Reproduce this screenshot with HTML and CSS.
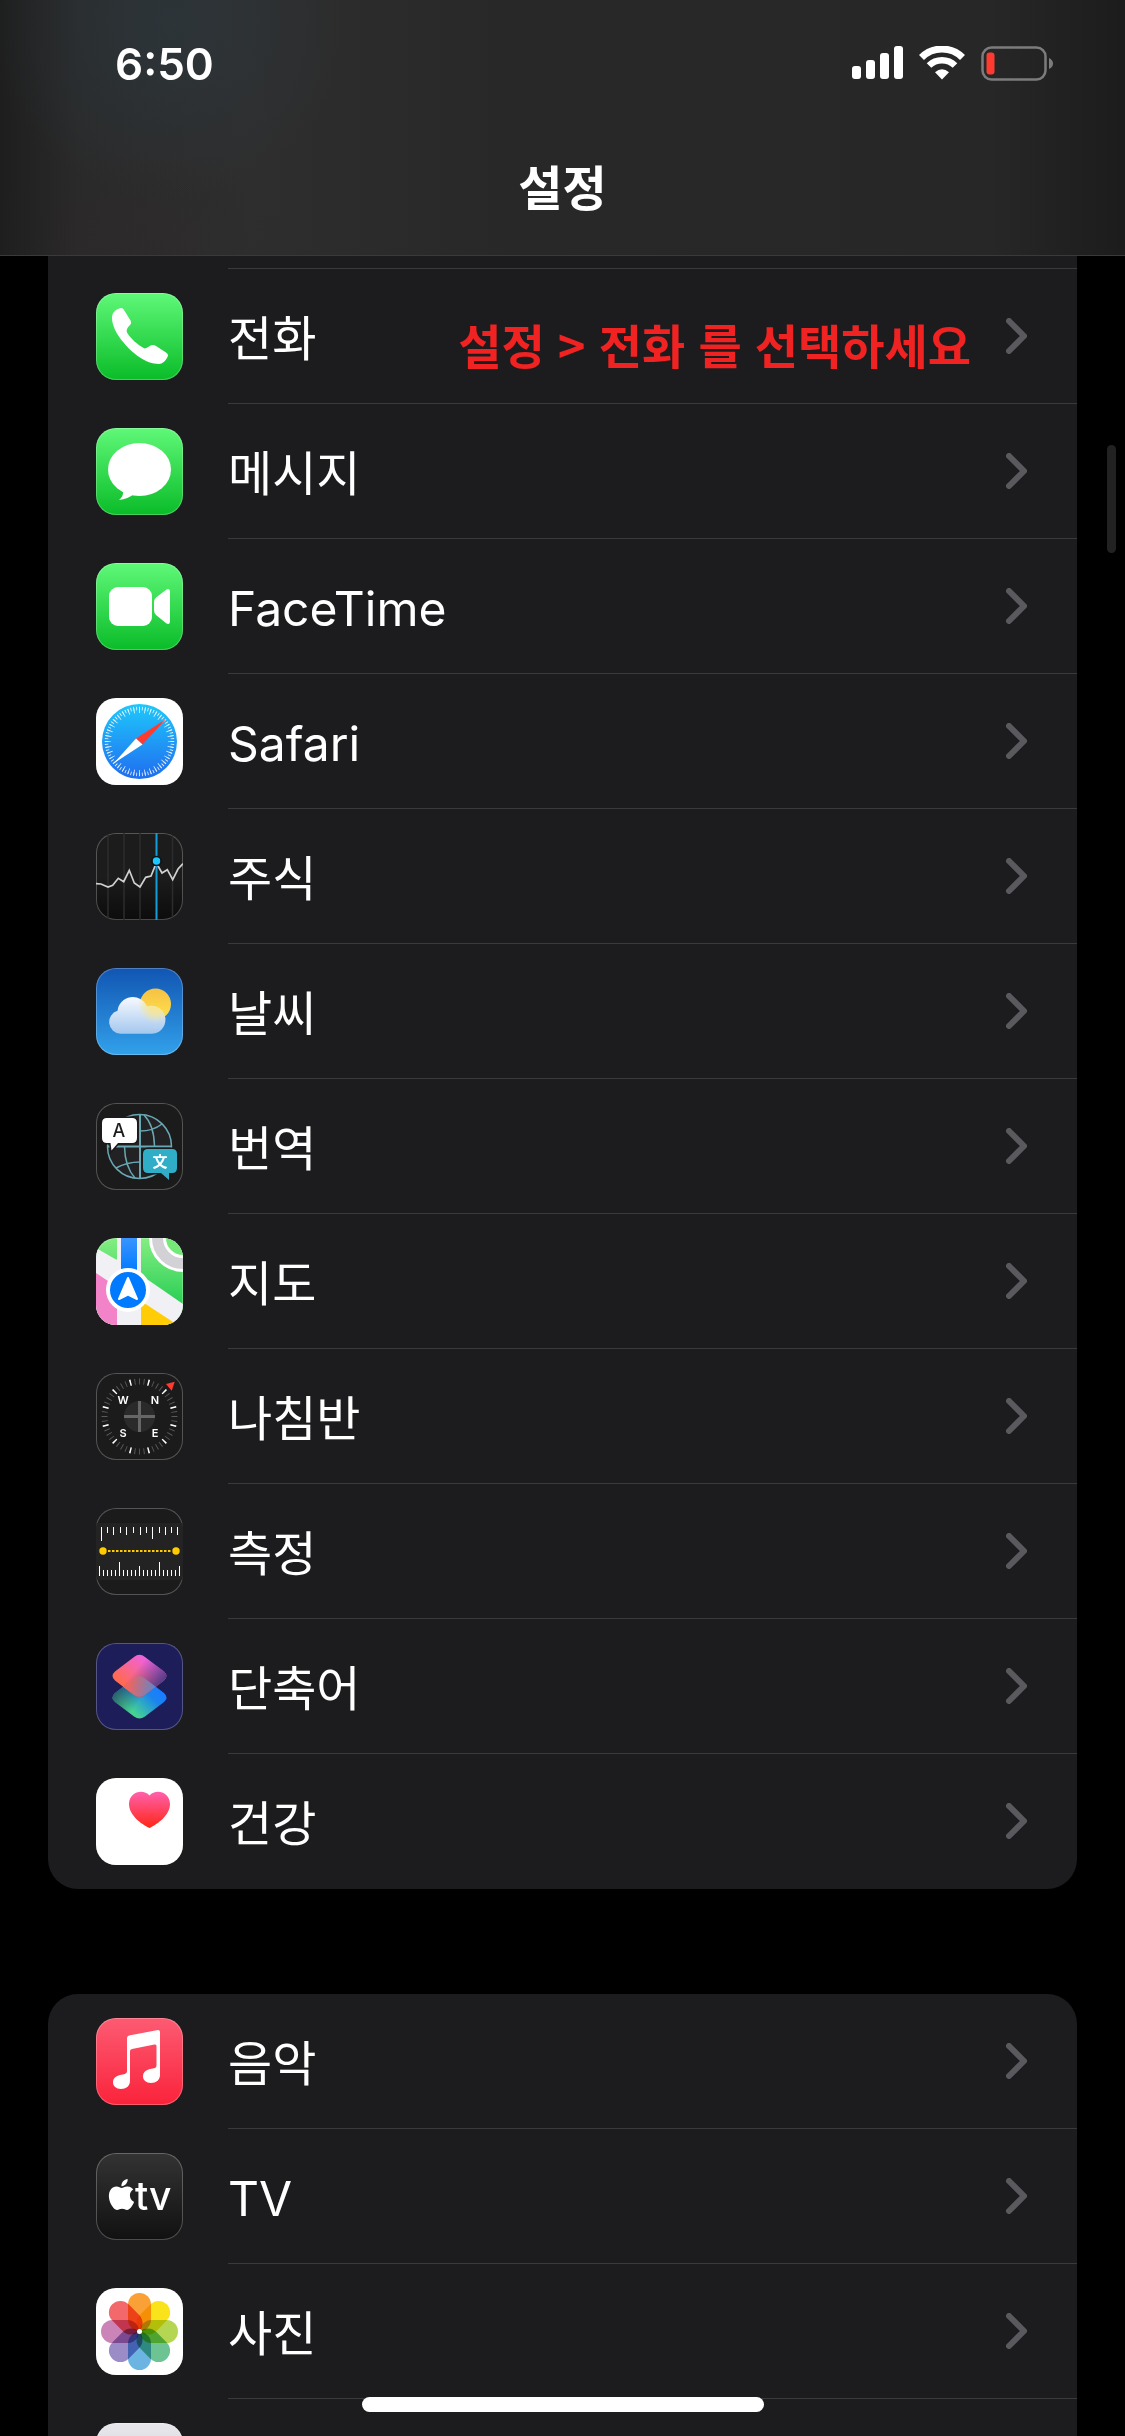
FILE: index.html
```html
<!DOCTYPE html>
<html lang="ko">
<head>
  <meta charset="UTF-8">
  <meta name="viewport" content="width=device-width, initial-scale=1.0">
  <title>설정</title>
  <link rel="stylesheet" href="styles.css">
</head>
<body>

  <!-- Header -->
  <header class="header">
    <div class="status-bar">
      <span class="time">6:50</span>
      <div class="status-icons">
        <svg width="51" height="34" viewBox="0 0 51 34" fill="#fff">
          <rect x="0" y="20" width="9" height="13" rx="3"/>
          <rect x="14" y="14" width="9" height="19" rx="3"/>
          <rect x="28" y="7" width="9" height="26" rx="3"/>
          <rect x="42" y="0" width="9" height="33" rx="3"/>
        </svg>
        <svg width="46" height="34" viewBox="0 0 46 34">
          <path d="M2.5 11.5a29 29 0 0 1 41 0" fill="none" stroke="#fff" stroke-width="7"/>
          <path d="M10 19.5a18.5 18.5 0 0 1 26 0" fill="none" stroke="#fff" stroke-width="6.5"/>
          <path d="M23 33.5l-7-7.3q7-6 14 0z" fill="#fff"/>
        </svg>
        <svg width="72" height="36" viewBox="0 0 72 36">
          <rect x="1.5" y="1.5" width="63" height="32" rx="9" fill="none" stroke="#7c7c7c" stroke-width="2.5"/>
          <rect x="5.5" y="6.5" width="8" height="22" rx="3" fill="#ff3b30"/>
          <path d="M68 12q4 2 4 5.5t-4 5.5z" fill="#7c7c7c"/>
        </svg>
      </div>
    </div>
    <h1 class="title">설정</h1>
  </header>

  <!-- Settings list -->
  <main class="content">
    <ul class="group group-first">
      <li class="row-end"></li>
      <li>
        <a class="row" href="#phone">
          <svg class="app-icon green" viewBox="0 0 87 87">
            <path fill="#fff" d="M16 25C16 19 20 16 25 15Q27 15 28 17L34.5 27.5Q36 30 34 32C31 35 30 37 31 39.5C35 46 42 52 48.5 55.5Q50 55.5 53 53.5Q57 51 60 53L70 59.5Q73 61.5 71.5 64Q68 71 63 71C50 71 36 60 28 50C20 41 16 32 16 25Z"/>
          </svg>
          <span class="label"><span>전화</span><strong class="note">설정 &gt; 전화 를 선택하세요</strong><svg class="chevron" viewBox="0 0 21 36"><path d="M3 3l15 15L3 33"/></svg></span>
        </a>
      </li>
      <li>
        <a class="row" href="#messages">
          <svg class="app-icon green" viewBox="0 0 87 87" fill="#fff">
            <ellipse cx="43.5" cy="41.5" rx="31.5" ry="26.5"/>
            <path d="M27 62Q28 68 23 72Q32 71 38 66Z"/>
          </svg>
          <span class="label"><span>메시지</span><svg class="chevron" viewBox="0 0 21 36"><path d="M3 3l15 15L3 33"/></svg></span>
        </a>
      </li>
      <li>
        <a class="row" href="#facetime">
          <svg class="app-icon green" viewBox="0 0 87 87" fill="#fff">
            <rect x="13" y="24" width="43" height="39" rx="9"/>
            <path d="M58 40Q58 36 60 34.5L70.5 26.5Q74 25 74 29V58Q74 62 70.5 60.5L60 52Q58 50 58 47Z"/>
          </svg>
          <span class="label"><span lang="en">FaceTime</span><svg class="chevron" viewBox="0 0 21 36"><path d="M3 3l15 15L3 33"/></svg></span>
        </a>
      </li>
      <li>
        <a class="row" href="#safari">
          <svg class="app-icon white" viewBox="0 0 87 87">
            <defs>
              <linearGradient id="safari-blue" x1="0" y1="0" x2="0" y2="1">
                <stop offset="0" stop-color="#1fc8fb"/>
                <stop offset="1" stop-color="#1f6df0"/>
              </linearGradient>
            </defs>
            <circle cx="43.5" cy="43.5" r="37.5" fill="url(#safari-blue)"/>
            <g fill="none" stroke="#fff" opacity=".85">
              <circle cx="43.5" cy="43.5" r="33" stroke-width="3.5" pathLength="72" stroke-dasharray=".3 .7" stroke-dashoffset=".15"/>
              <circle cx="43.5" cy="43.5" r="31.5" stroke-width="6" pathLength="36" stroke-dasharray=".15 .85" stroke-dashoffset=".075"/>
            </g>
            <path d="M70 21L46.5 46.5L40 40.5Z" fill="#ff3b30"/>
            <path d="M17.5 65.5L46.5 46.5L40 40.5Z" fill="#fff"/>
          </svg>
          <span class="label"><span lang="en">Safari</span><svg class="chevron" viewBox="0 0 21 36"><path d="M3 3l15 15L3 33"/></svg></span>
        </a>
      </li>
      <li>
        <a class="row" href="#stocks">
          <svg class="app-icon stocks" viewBox="0 0 87 87">
            <path d="M12 0V87M28 0V87M44 0V87M76.5 0V87" stroke="#2c2c2e" stroke-width="1.5"/>
            <path d="M60.5 0V87" stroke="#149ed8" stroke-width="2"/>
            <polyline fill="none" stroke="#d0d0d0" stroke-width="1.7" points="0,50.7 5,51 12,54 16.7,52.3 22.3,45.3 27.7,48.7 33.3,37.3 38.3,50 44,54 49.7,44.3 55,43 60.3,30 66,40 71.3,36.7 76.7,46.7 82,36 87,30.7"/>
            <circle cx="60.5" cy="28" r="4.5" fill="#1ac8ff" stroke="#111" stroke-width="1.5"/>
          </svg>
          <span class="label"><span>주식</span><svg class="chevron" viewBox="0 0 21 36"><path d="M3 3l15 15L3 33"/></svg></span>
        </a>
      </li>
      <li>
        <a class="row" href="#weather">
          <svg class="app-icon weather" viewBox="0 0 87 87">
            <defs>
              <linearGradient id="sun" x1="0" y1="0" x2="0" y2="1">
                <stop offset="0" stop-color="#f6c143"/>
                <stop offset="1" stop-color="#ffe24e"/>
              </linearGradient>
              <linearGradient id="cloud" gradientUnits="userSpaceOnUse" x1="0" y1="28" x2="0" y2="66">
                <stop offset="0" stop-color="#fafbff"/>
                <stop offset="1" stop-color="#a3c7ee"/>
              </linearGradient>
              <radialGradient id="glow" gradientUnits="userSpaceOnUse" cx="60" cy="37" r="18">
                <stop offset=".4" stop-color="#f8e58a" stop-opacity=".85"/>
                <stop offset="1" stop-color="#f8e58a" stop-opacity="0"/>
              </radialGradient>
            </defs>
            <circle cx="59.5" cy="36" r="15.5" fill="url(#sun)"/>
            <path fill="url(#cloud)" d="M24.5 65.7A11.7 11.7 0 0 1 21.5 42.8A15.4 15.4 0 0 1 51 38.5A14 14 0 1 1 54 65.7Z"/>
            <path fill="url(#glow)" d="M24.5 65.7A11.7 11.7 0 0 1 21.5 42.8A15.4 15.4 0 0 1 51 38.5A14 14 0 1 1 54 65.7Z"/>
          </svg>
          <span class="label"><span>날씨</span><svg class="chevron" viewBox="0 0 21 36"><path d="M3 3l15 15L3 33"/></svg></span>
        </a>
      </li>
      <li>
        <a class="row" href="#translate">
          <svg class="app-icon dark" viewBox="0 0 87 87">
            <g fill="none" stroke="#68a8b4" stroke-width="1.5">
              <circle cx="43.5" cy="43.5" r="32" fill="#222224"/>
              <path d="M44 11V76M11 43.5H76" stroke-width="2"/>
              <path d="M48 12Q58 22 58.5 43M44 28Q57 28 66 21M28.5 44Q29 64 39 75M44 59Q31 59 20 65"/>
            </g>
            <path d="M11 15H36Q41 15 41 20V35Q41 40 36 40H22L15.5 47.5L14.5 40H11Q6 40 6 35V20Q6 15 11 15Z" fill="#fff" stroke="#1b1b1c" stroke-width="3" paint-order="stroke"/>
            <path d="M52 46H76Q81 46 81 51V65Q81 70 76 70H73V77L65 70H52Q47 70 47 65V51Q47 46 52 46Z" fill="#30aec8" stroke="#1b1b1c" stroke-width="3" paint-order="stroke"/>
            <text class="glyph-a" x="23" y="34" text-anchor="middle">A</text>
            <text class="glyph-wen" x="64" y="64" text-anchor="middle">文</text>
          </svg>
          <span class="label"><span>번역</span><svg class="chevron" viewBox="0 0 21 36"><path d="M3 3l15 15L3 33"/></svg></span>
        </a>
      </li>
      <li>
        <a class="row" href="#maps">
          <svg class="app-icon maps" viewBox="0 0 87 87">
            <defs>
              <linearGradient id="route" x1="0" y1="0" x2="0" y2="1">
                <stop offset="0" stop-color="#3a94ff"/>
                <stop offset="1" stop-color="#007aff"/>
              </linearGradient>
            </defs>
            <path d="M0 10L20 21.5H45V37L87 66V87H0Z" fill="#f0f0f5"/>
            <path d="M21 0H45V87H21Z" fill="#f0f0f5"/>
            <path d="M25 0H41V34H25Z" fill="url(#route)"/>
            <path d="M0 35L21 49V87H0Z" fill="#f283c9"/>
            <path d="M45 63L77 84L81 87H45Z" fill="#ffcc05"/>
            <circle cx="87" cy="0" r="32.5" fill="#d1d1d6" stroke="#fff" stroke-width="3"/>
            <circle cx="87" cy="0" r="18.5" fill="#76e878" stroke="#fff" stroke-width="3"/>
            <circle cx="32" cy="52" r="20" fill="#007aff" stroke="#fff" stroke-width="4"/>
            <path d="M32 40L41 61L32 56.5L23 61Z" fill="#fff" stroke="#fff" stroke-width="2" stroke-linejoin="round"/>
          </svg>
          <span class="label"><span>지도</span><svg class="chevron" viewBox="0 0 21 36"><path d="M3 3l15 15L3 33"/></svg></span>
        </a>
      </li>
      <li>
        <a class="row" href="#compass">
          <svg class="app-icon dark" viewBox="0 0 87 87">
            <circle cx="43.5" cy="43.5" r="15.5" fill="#2a2a2b"/>
            <path d="M43.5 28V59M28 43.5H59" stroke="#666" stroke-width="3"/>
            <g fill="none" stroke-width="6">
              <circle cx="43.5" cy="43.5" r="35" stroke="#5a5a5a" pathLength="48" stroke-dasharray=".2 .8" stroke-dashoffset=".1"/>
              <circle cx="43.5" cy="43.5" r="35" stroke="#fff" pathLength="12" stroke-dasharray=".08 .92" stroke-dashoffset=".54"/>
            </g>
            <path d="M70 11L78.7 8.7L75.7 17.7Z" fill="#ff3b30"/>
            <g class="glyph-compass" text-anchor="middle">
              <text x="27" y="31">W</text>
              <text x="59" y="31">N</text>
              <text x="27" y="64">S</text>
              <text x="59" y="64">E</text>
            </g>
          </svg>
          <span class="label"><span>나침반</span><svg class="chevron" viewBox="0 0 21 36"><path d="M3 3l15 15L3 33"/></svg></span>
        </a>
      </li>
      <li>
        <a class="row" href="#measure">
          <svg class="app-icon dark" viewBox="0 0 87 87">
            <rect y="15" width="87" height="57" fill="#232324"/>
            <path stroke="#fff" d="M5.5 19V33M11.5 19V25M17.5 19V27M24.5 19V25M30.5 19V27M37.5 19V25M44.5 19V27M50.5 19V25M56.5 19V31M63.5 19V25M69.5 19V27M75.5 19V25M81.5 19V27"/>
            <path stroke="#fff" d="M3.5 58V68M7.5 62V68M11.5 62V68M15.5 62V68M19.5 62V68M23.5 54V68M27.5 62V68M31.5 62V68M35.5 62V68M39.5 62V68M43.5 58V68M47.5 62V68M51.5 62V68M55.5 62V68M59.5 62V68M63.5 54V68M67.5 62V68M71.5 62V68M75.5 62V68M79.5 62V68M83.5 58V68"/>
            <path d="M12 43H76" stroke="#ffcc00" stroke-width="2" stroke-dasharray="2.5 1.5"/>
            <circle cx="7" cy="43" r="3.7" fill="#ffcc00"/>
            <circle cx="80" cy="43" r="3.7" fill="#ffcc00"/>
          </svg>
          <span class="label"><span>측정</span><svg class="chevron" viewBox="0 0 21 36"><path d="M3 3l15 15L3 33"/></svg></span>
        </a>
      </li>
      <li>
        <a class="row" href="#shortcuts">
          <svg class="app-icon shortcuts" viewBox="0 0 87 87">
            <defs>
              <linearGradient id="layer-low" gradientUnits="userSpaceOnUse" x1="34" y1="66" x2="58" y2="42">
                <stop offset="0" stop-color="#45d392"/>
                <stop offset=".7" stop-color="#1a84ef"/>
                <stop offset="1" stop-color="#1a7cff"/>
              </linearGradient>
              <linearGradient id="layer-shade" gradientUnits="userSpaceOnUse" x1="22" y1="46" x2="42" y2="60">
                <stop offset="0" stop-color="#1f2f60" stop-opacity=".7"/>
                <stop offset="1" stop-color="#1f2f60" stop-opacity="0"/>
              </linearGradient>
              <linearGradient id="layer-top" gradientUnits="userSpaceOnUse" x1="24" y1="38" x2="46" y2="14">
                <stop offset="0" stop-color="#ff6a52"/>
                <stop offset="1" stop-color="#f062d8"/>
              </linearGradient>
              <linearGradient id="layer-fade" gradientUnits="userSpaceOnUse" x1="44" y1="22" x2="68" y2="42">
                <stop offset="0" stop-color="#3b3579" stop-opacity="0"/>
                <stop offset="1" stop-color="#3b3579" stop-opacity=".95"/>
              </linearGradient>
              <linearGradient id="layer-mix" gradientUnits="userSpaceOnUse" x1="32" y1="42" x2="60" y2="46">
                <stop offset="0" stop-color="#f0655f"/>
                <stop offset="1" stop-color="#5c86cc"/>
              </linearGradient>
              <clipPath id="top-clip"><path d="M38 14Q43.5 9.5 49 14L68 28.5Q73 33 68 37.5L49 52Q43.5 56 38 52L19 37.5Q14 33 19 28.5Z"/></clipPath>
            </defs>
            <path d="M38 35.5Q43.5 31 49 35.5L68 50Q73 54.5 68 59L49 73.5Q43.5 77.5 38 73.5L19 59Q14 54.5 19 50Z" fill="url(#layer-low)"/>
            <path d="M38 35.5Q43.5 31 49 35.5L68 50Q73 54.5 68 59L49 73.5Q43.5 77.5 38 73.5L19 59Q14 54.5 19 50Z" fill="url(#layer-shade)"/>
            <path d="M38 14Q43.5 9.5 49 14L68 28.5Q73 33 68 37.5L49 52Q43.5 56 38 52L19 37.5Q14 33 19 28.5Z" fill="url(#layer-top)"/>
            <path d="M38 14Q43.5 9.5 49 14L68 28.5Q73 33 68 37.5L49 52Q43.5 56 38 52L19 37.5Q14 33 19 28.5Z" fill="url(#layer-fade)"/>
            <path clip-path="url(#top-clip)" d="M38 35.5Q43.5 31 49 35.5L68 50Q73 54.5 68 59L49 73.5Q43.5 77.5 38 73.5L19 59Q14 54.5 19 50Z" fill="url(#layer-mix)"/>
          </svg>
          <span class="label"><span>단축어</span><svg class="chevron" viewBox="0 0 21 36"><path d="M3 3l15 15L3 33"/></svg></span>
        </a>
      </li>
      <li>
        <a class="row" href="#health">
          <svg class="app-icon white" viewBox="0 0 87 87">
            <defs>
              <linearGradient id="heart" x1="0" y1="0" x2="0" y2="1">
                <stop offset="0" stop-color="#ff61ad"/>
                <stop offset="1" stop-color="#ff2616"/>
              </linearGradient>
            </defs>
            <path fill="url(#heart)" d="M53.5 50C45 46 33 37 33 26C33 14 47 10 53.5 17.5C60 10 74 14 74 26C74 37 62 46 53.5 50Z"/>
          </svg>
          <span class="label"><span>건강</span><svg class="chevron" viewBox="0 0 21 36"><path d="M3 3l15 15L3 33"/></svg></span>
        </a>
      </li>
    </ul>

    <ul class="group">
      <li>
        <a class="row" href="#music">
          <svg class="app-icon music" viewBox="0 0 87 87" fill="#fff">
            <path d="M31 20Q31 18 33 17.5L62 12Q64 12 64 14V57C64 62 60 65 55 65C50 65 47 62 47 58.5C47 54 50 52 54 51L58 50.3Q60.5 50 60.5 47V28Q60.5 26 58.5 26.5L36 31Q34 31.5 34 33V63C34 68 30 71 25 71C20 71 17 68 17 64.5C17 60 20 58 24 57L28 56.3Q31 55.5 31 53Z"/>
          </svg>
          <span class="label"><span>음악</span><svg class="chevron" viewBox="0 0 21 36"><path d="M3 3l15 15L3 33"/></svg></span>
        </a>
      </li>
      <li>
        <a class="row" href="#tv">
          <svg class="app-icon tv" viewBox="0 0 87 87" fill="#fff">
            <path transform="translate(10 26) scale(1.29)" d="M12.152 6.896c-.948 0-2.415-1.078-3.96-1.04-2.04.027-3.91 1.183-4.961 3.014-2.117 3.675-.546 9.103 1.519 12.09 1.013 1.454 2.208 3.09 3.792 3.039 1.52-.065 2.09-.987 3.935-.987 1.831 0 2.35.987 3.96.948 1.637-.026 2.676-1.48 3.676-2.948 1.156-1.688 1.636-3.325 1.662-3.415-.039-.013-3.182-1.221-3.22-4.857-.026-3.04 2.48-4.494 2.597-4.559-1.429-2.09-3.623-2.324-4.39-2.376-2-.156-3.675 1.09-4.61 1.09zM15.53 3.83c.843-1.012 1.4-2.427 1.245-3.83-1.207.052-2.662.805-3.532 1.818-.78.896-1.454 2.338-1.273 3.714 1.338.104 2.715-.688 3.559-1.701"/>
            <text class="glyph-tv" x="39" y="57">tv</text>
          </svg>
          <span class="label"><span lang="en">TV</span><svg class="chevron" viewBox="0 0 21 36"><path d="M3 3l15 15L3 33"/></svg></span>
        </a>
      </li>
      <li>
        <a class="row" href="#photos">
          <svg class="app-icon white" viewBox="0 0 87 87">
            <g class="petals">
              <rect x="32" y="5" width="23" height="38" rx="11.5" fill="#f9a136"/>
              <rect x="32" y="5" width="23" height="38" rx="11.5" fill="#fbe31c" transform="rotate(45 43.5 43.5)"/>
              <rect x="32" y="5" width="23" height="38" rx="11.5" fill="#b5d653" transform="rotate(90 43.5 43.5)"/>
              <rect x="32" y="5" width="23" height="38" rx="11.5" fill="#6dc391" transform="rotate(135 43.5 43.5)"/>
              <rect x="32" y="5" width="23" height="38" rx="11.5" fill="#6cb4e2" transform="rotate(180 43.5 43.5)"/>
              <rect x="32" y="5" width="23" height="38" rx="11.5" fill="#9b8cc8" transform="rotate(225 43.5 43.5)"/>
              <rect x="32" y="5" width="23" height="38" rx="11.5" fill="#cb84b7" transform="rotate(270 43.5 43.5)"/>
              <rect x="32" y="5" width="23" height="38" rx="11.5" fill="#f3686a" transform="rotate(315 43.5 43.5)"/>
            </g>
            <circle cx="43.5" cy="43.5" r="2.5" fill="#fff"/>
          </svg>
          <span class="label"><span>사진</span><svg class="chevron" viewBox="0 0 21 36"><path d="M3 3l15 15L3 33"/></svg></span>
        </a>
      </li>
      <li>
        <div class="row">
          <svg class="app-icon silver" viewBox="0 0 87 87"></svg>
        </div>
      </li>
    </ul>
  </main>

  <div class="scroll-thumb"></div>
  <div class="home-bar"></div>

</body>
</html>
```

FILE: styles.css
```css
/* General */
* {
  box-sizing: border-box;
}

body {
  margin: 0;
  height: 100vh;
  overflow: hidden;
  position: relative;
  display: flex;
  flex-direction: column;
  background: #000;
  color: #fff;
  font-family: Inter, "Noto Sans CJK KR", sans-serif;
  font-size: 48px;
}

/* Header */
.header {
  flex: none;
  height: 256px;
  border-bottom: 1px solid #3a3a3c;
  background:
    radial-gradient(ellipse 180px 180px at 15% 8%, rgba(45, 62, 72, 0.45), transparent),
    radial-gradient(ellipse 160px 110px at 12% 100%, rgba(52, 36, 38, 0.2), transparent),
    linear-gradient(to right, #1e1e1e, #2a2a2a 7%, #2e2e2e 22%, #282828 45%, #272727 88%, #1c1c1c);
}

.status-bar {
  display: flex;
  justify-content: space-between;
  align-items: center;
  height: 128px;
  padding: 0 72px 0 115px;
}

.time {
  font-size: 44px;
  font-weight: 600;
}

.status-icons {
  display: flex;
  gap: 16px;
}

.title {
  margin: 0;
  line-height: 122px;
  font-size: 48px;
  font-weight: 600;
  text-align: center;
}

/* List */
.content {
  flex: 1;
  min-height: 0;
  overflow: hidden;
  padding: 0 48px;
}

.group {
  list-style: none;
  margin: 0 0 105px;
  padding: 0;
  background: #1c1c1e;
  border-radius: 30px;
  overflow: hidden;
}

.group-first {
  border-radius: 0 0 30px 30px;
}

.row-end {
  height: 13px;
  margin-left: 180px;
  border-bottom: 1px solid #3a3a3c;
}

.row {
  display: flex;
  align-items: center;
  gap: 45px;
  height: 135px;
  padding-left: 48px;
  color: #fff;
  text-decoration: none;
}

.label {
  flex: 1;
  display: flex;
  align-items: center;
  height: 100%;
  padding-right: 50px;
  border-bottom: 1px solid #3a3a3c;
}

.label span {
  padding-bottom: 3px;
}

.label span:lang(en) {
  padding: 5px 0 0;
}

.group-first li:last-child .label {
  border-bottom-color: transparent;
}

.note {
  margin-left: auto;
  padding: 15px 35px 0 0;
  font-family: "Noto Sans CJK KR", sans-serif;
  font-size: 47px;
  font-weight: 700;
  color: #f02222;
}

.chevron {
  width: 21px;
  height: 36px;
  margin-left: auto;
  fill: none;
  stroke: #5a5a5e;
  stroke-width: 6;
  stroke-linecap: round;
  stroke-linejoin: round;
}

.note + .chevron {
  margin-left: 0;
}

/* App icons */
.app-icon {
  flex: none;
  width: 87px;
  height: 87px;
  border-radius: 20px;
  box-shadow: inset 0 0 0 1px rgba(255, 255, 255, 0.25);
}

.green {
  background: linear-gradient(#5ff878, #0abc28);
}

.white {
  background: #fff;
}

.dark {
  background: #1b1b1c;
}

.stocks {
  background: linear-gradient(#1c1c1d 50%, #0c0c0c);
}

.weather {
  background: linear-gradient(#1155b2, #32a1ea);
}

.maps {
  background: linear-gradient(#84ee82, #30d158 70%);
}

.shortcuts {
  background: #1d1d5a;
}

.music {
  background: linear-gradient(#fc5b73, #fa233b);
}

.tv {
  background: linear-gradient(#333, #111);
}

.silver {
  background: linear-gradient(#e8e8ec, #c8c8cc);
}

.petals {
  isolation: isolate;
}

.petals rect {
  mix-blend-mode: multiply;
}

.glyph-a {
  font-size: 18px;
  font-weight: 500;
  fill: #1c1c1e;
}

.glyph-wen {
  font-size: 15px;
  font-weight: 700;
  fill: #fff;
}

.glyph-compass {
  font-size: 11px;
  font-weight: 600;
  fill: #fff;
}

.glyph-tv {
  font-size: 39px;
  font-weight: 500;
}

/* Overlays */
.scroll-thumb {
  position: absolute;
  top: 445px;
  right: 9px;
  width: 9px;
  height: 108px;
  border-radius: 5px;
  background: #222;
}

.home-bar {
  position: absolute;
  bottom: 24px;
  left: 50%;
  width: 402px;
  height: 15px;
  margin-left: -201px;
  border-radius: 8px;
  background: #fff;
}
```
